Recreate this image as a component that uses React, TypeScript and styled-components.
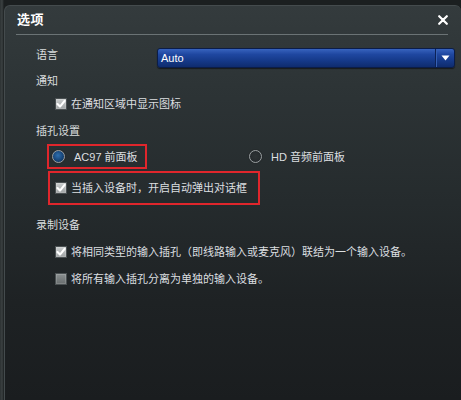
import React from 'react';
import styled, { createGlobalStyle } from 'styled-components';

const GlobalStyle = createGlobalStyle`
	html, body {
		margin: 0;
		padding: 0;
		background: #151819;
	}
	body {
		font-family: 'Liberation Sans', 'Noto Sans CJK SC', sans-serif;
		-webkit-font-smoothing: antialiased;
	}
`;

const Page = styled.div`
	height: 400px;
	padding: 5px 0 0 4px;
	box-sizing: border-box;
	overflow: hidden;
	background: linear-gradient(90deg, #2c3132 0, #3b4142 2px, #1b1f20 4px);
`;

const Dialog = styled.div`
	width: 457px;
	height: 395px;
	box-sizing: border-box;
	border: 1px solid #444b4d;
	border-right: none;
	border-bottom: none;
	border-radius: 6px 6px 0 0;
	background: linear-gradient(180deg, #343b3d 0%, #2d3436 20%, #252b2d 50%, #1e2224 75%, #1a1d1f 100%);
	color: #d6dadb;
	font-size: 11px;
`;

const Header = styled.div`
	height: 28px;
	display: flex;
	align-items: center;
	justify-content: space-between;
	padding: 0 13px 0 12px;
`;

const Title = styled.div`
	font-size: 13px;
	font-weight: bold;
	color: #ffffff;
	margin-bottom: 4px;
	letter-spacing: 0.5px;
`;

const CloseButton = styled.button`
	border: none;
	background: none;
	padding: 0;
	width: 10px;
	height: 10px;
	display: flex;
	cursor: pointer;
`;

const Divider = styled.div`
	height: 1px;
	margin: 0 13px 0 11px;
	background: #6b7375;
`;

const Body = styled.div`
	padding-left: 31px;
	display: flex;
	flex-direction: column;
`;

const LanguageRow = styled.div`
	display: flex;
	align-items: flex-start;
	margin-top: 13px;
`;

const Label = styled.div<{ $width?: number }>`
	line-height: 14px;
	width: ${(p) => (p.$width ? `${p.$width}px` : 'auto')};
	color: #d8dcdd;
`;

const SectionTitle = styled(Label)<{ $gap: number }>`
	margin-top: ${(p) => p.$gap}px;
`;

const Select = styled.div`
	width: 298px;
	height: 20px;
	box-sizing: border-box;
	border: 1px solid #0b1d48;
	border-radius: 3px;
	background: linear-gradient(180deg, #3763be 0%, #1f47a0 30%, #163b8c 60%, #0f2c6e 100%);
	box-shadow: 0 1px 1px rgba(0, 0, 0, 0.5);
	display: flex;
	align-items: center;
	color: #ffffff;
`;

const SelectValue = styled.div`
	flex: 1;
	padding-left: 3px;
	font-size: 11px;
`;

const SelectArrow = styled.div`
	width: 18px;
	height: 100%;
	border-left: 1px solid #0c2156;
	box-shadow: inset 1px 0 0 #3560b4;
	display: flex;
	align-items: center;
	justify-content: center;
`;

const OptionRow = styled.div<{ $gap: number }>`
	display: flex;
	align-items: center;
	margin-top: ${(p) => p.$gap}px;
	padding-left: 19px;
	line-height: 14px;
	gap: 4px;
	color: #dcdfe0;
`;

const Box = styled.span<{ $checked?: boolean }>`
	width: 12px;
	height: 12px;
	box-sizing: border-box;
	border: 1px solid #4a5052;
	background: ${(p) =>
		p.$checked
			? 'linear-gradient(180deg, #c9cccd 0%, #9fa3a4 100%)'
			: 'linear-gradient(180deg, #8a8f90 0%, #686d6e 100%)'};
	box-shadow: inset 0 0 0 1px rgba(255, 255, 255, 0.15);
	display: flex;
	align-items: center;
	justify-content: center;
	flex-shrink: 0;
`;

const RadioRow = styled.div`
	display: flex;
	align-items: center;
	margin-top: 6px;
	padding-left: 11px;
`;

const Highlight = styled.div<{ $width: number; $height: number }>`
	width: ${(p) => p.$width}px;
	height: ${(p) => p.$height}px;
	box-sizing: border-box;
	border: 2px solid #e0262c;
	display: flex;
	align-items: center;
`;

const RadioOption = styled.div`
	display: flex;
	align-items: center;
	gap: 9px;
	color: #dcdfe0;
	line-height: 14px;
`;

const Radio = styled.span<{ $selected?: boolean }>`
	width: 13px;
	height: 13px;
	box-sizing: border-box;
	border-radius: 50%;
	border: 1.5px solid #9a9fa1;
	background: ${(p) =>
		p.$selected
			? 'radial-gradient(circle at 45% 40%, #2f6fae 0%, #174679 55%, #0d2a4a 100%)'
			: 'radial-gradient(circle, #2d3335 0%, #22272a 100%)'};
	box-shadow: 0 0 0 1px #262b2d;
	flex-shrink: 0;
`;

const CheckboxInBox = styled.div`
	display: flex;
	align-items: center;
	gap: 4px;
	padding-left: 5px;
	color: #dcdfe0;
	line-height: 14px;
`;

const Check = () => (
	<svg width="10" height="10" viewBox="0 0 10 10">
		<path d="M1.5 5 L4 7.6 L8.6 1.8" fill="none" stroke="#ffffff" strokeWidth="2.1" strokeLinecap="round" strokeLinejoin="round" />
	</svg>
);

const Checkbox = ({ checked }: { checked?: boolean }) => <Box $checked={checked}>{checked && <Check />}</Box>;

const App = () => (
	<>
		<GlobalStyle />
		<Page>
			<Dialog>
				<Header>
					<Title>选项</Title>
					<CloseButton>
						<svg width="10" height="10" viewBox="0 0 10 10">
							<path d="M1.2 1.2 L8.8 8.8 M8.8 1.2 L1.2 8.8" stroke="#ffffff" strokeWidth="2.2" strokeLinecap="round" />
						</svg>
					</CloseButton>
				</Header>
				<Divider />
				<Body>
					<LanguageRow>
						<Label $width={121}>语言</Label>
						<Select>
							<SelectValue>Auto</SelectValue>
							<SelectArrow>
								<svg width="9" height="6" viewBox="0 0 9 6">
									<path d="M0.5 0.5 H8.5 L4.5 5.5 Z" fill="#ffffff" />
								</svg>
							</SelectArrow>
						</Select>
					</LanguageRow>

					<SectionTitle $gap={6}>通知</SectionTitle>
					<OptionRow $gap={9}>
						<Checkbox checked />
						<span>在通知区域中显示图标</span>
					</OptionRow>

					<SectionTitle $gap={13}>插孔设置</SectionTitle>
					<RadioRow>
						<Highlight $width={100} $height={25}>
							<RadioOption style={{ paddingLeft: 3 }}>
								<Radio $selected />
								<span>AC97 前面板</span>
							</RadioOption>
						</Highlight>
						<RadioOption style={{ marginLeft: 102 }}>
							<Radio />
							<span>HD 音频前面板</span>
						</RadioOption>
					</RadioRow>
					<Highlight $width={212} $height={34} style={{ marginLeft: 12, marginTop: 2 }}>
						<CheckboxInBox>
							<Checkbox checked />
							<span>当插入设备时，开启自动弹出对话框</span>
						</CheckboxInBox>
					</Highlight>

					<SectionTitle $gap={13}>录制设备</SectionTitle>
					<OptionRow $gap={13}>
						<Checkbox checked />
						<span>将相同类型的输入插孔（即线路输入或麦克风）联结为一个输入设备。</span>
					</OptionRow>
					<OptionRow $gap={13}>
						<Checkbox />
						<span>将所有输入插孔分离为单独的输入设备。</span>
					</OptionRow>
				</Body>
			</Dialog>
		</Page>
	</>
);

export default App;
